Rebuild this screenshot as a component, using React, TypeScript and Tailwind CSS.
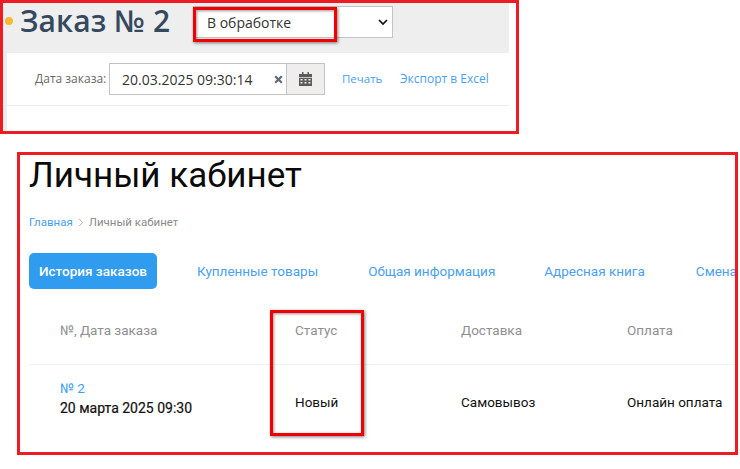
import React from "react";

function Chevron() {
  return (
    <svg width="10" height="7" viewBox="0 0 10 7" className="block">
      <path d="M1 1l4 4 4-4" fill="none" stroke="#111" strokeWidth="1.7" />
    </svg>
  );
}

function Calendar() {
  return (
    <svg width="13" height="14" viewBox="0 0 13 14" className="block" fill="#5f5a57">
      <path d="M3 0h1.5v2H3zM8.5 0H10v2H8.5z" />
      <path d="M0 2h13v3H0z" />
      <path d="M0 5.8h13V14H0zM1.5 7v1.5h2V7zm4 0v1.5h2V7zm4 0v1.5h2V7zm-8 3v1.5h2V10zm4 0v1.5h2V10zm4 0v1.5h2V10z" fillRule="evenodd" />
    </svg>
  );
}

function Clear() {
  return (
    <svg width="9" height="9" viewBox="0 0 9 9" className="block">
      <path d="M1.2 1.2l6.6 6.6M7.8 1.2L1.2 7.8" fill="none" stroke="#5f6b76" strokeWidth="2.2" />
    </svg>
  );
}

export default function App() {
  return (
    <div className="relative w-[740px] h-[469px] bg-white overflow-hidden font-['Roboto',sans-serif]">
      {/* Upper crop */}
      <section className="w-[519px] h-[134px] border-[3px] border-[#ed1c24] font-['Open_Sans',sans-serif]">
        <div className="flex h-full w-[506px] flex-col bg-[#eeeeee]">
          <header className="flex h-[50px] shrink-0 items-start">
            <span className="ml-[2px] mt-[14px] size-[8px] rounded-full bg-[#f9b934]" />
            <h1 className="ml-[7px] mt-[-3px] w-[152px] text-[30px] leading-[41px] font-semibold text-[#34495e] tracking-[0.1px] whitespace-nowrap">Заказ № 2</h1>
            <div className="ml-[21px] mt-[3px] flex h-[32px] w-[200px] items-center justify-between border border-[#c4c4c4] bg-white pl-[13px] pr-[4px] text-[14px] text-[#333]">
              <span>В обработке</span>
              <Chevron />
            </div>
          </header>
          <div className="ml-[4px] flex-1 bg-white">
            <div className="flex h-[53px] items-start border-b border-[#eeeeee] pl-[28px] pt-[10px]">
              <span className="mt-[8px] w-[71px] text-[12px] leading-[16px] text-[#666] whitespace-nowrap">Дата заказа:</span>
              <div className="ml-[3px] flex h-[32px] w-[178px] items-center justify-between border border-[#c4c4c4] pl-[12px] pr-[3px] text-[14px] text-[#333] whitespace-nowrap">
                <span>20.03.2025 09:30:14</span>
                <Clear />
              </div>
              <div className="flex h-[32px] w-[38px] items-center justify-center border border-l-0 border-[#c4c4c4] bg-[#eeeeee]">
                <Calendar />
              </div>
              <a className="ml-[17px] mt-[8px] w-[41px] text-[11.5px] leading-[16px] text-[#4a9ff0] whitespace-nowrap">Печать</a>
              <a className="ml-[17px] mt-[8px] text-[12px] leading-[16px] text-[#4a9ff0] whitespace-nowrap">Экспорт в Excel</a>
            </div>
          </div>
        </div>
      </section>

      {/* Lower crop */}
      <section className="ml-[17px] mt-[18px] h-[303px] w-[721px] overflow-hidden border-[3px] border-[#ed1c24] pl-[9px]">
        <h2 className="text-[35px] leading-[42px] text-[#0a0a0a] whitespace-nowrap">Личный кабинет</h2>
        <nav className="mt-[18px] flex items-center text-[11.5px] leading-[14px] whitespace-nowrap">
          <a className="text-[#4a9ff0]">Главная</a>
          <svg width="6" height="9" viewBox="0 0 6 9" className="mx-[5px] shrink-0">
            <path d="M1 .8l3.6 3.7L1 8.2" fill="none" stroke="#aaa" strokeWidth="0.9" />
          </svg>
          <span className="text-[#8a8a8a]">Личный кабинет</span>
        </nav>
        <div className="mt-[24px] flex items-center text-[13.5px] whitespace-nowrap">
          <button className="h-[36px] w-[128px] shrink-0 rounded-[5px] bg-[#2f9cf0] font-medium text-white">История заказов</button>
          <a className="ml-[40px] text-[#4a9ff0]">Купленные товары</a>
          <a className="ml-[50px] text-[#4a9ff0]">Общая информация</a>
          <a className="ml-[49px] text-[#4a9ff0]">Адресная книга</a>
          <a className="ml-[51px] text-[#4a9ff0]">Смена</a>
        </div>
        <div className="mt-[20px] border-b border-[#eef0f5] h-[56px] grid grid-cols-[235px_166px_166px_1fr] pl-[31px] pt-[11px] text-[13.5px] leading-[20px] text-[#8f8f8f] whitespace-nowrap">
          <span>№, Дата заказа</span>
          <span>Статус</span>
          <span>Доставка</span>
          <span>Оплата</span>
        </div>
        <div className="grid grid-cols-[235px_166px_166px_1fr] items-start pl-[31px] pt-[13px] text-[13.5px] leading-[20px] text-[#111] whitespace-nowrap">
          <div>
            <a className="block text-[#3d9df0]">№ 2</a>
            <span className="text-[14px] [-webkit-text-stroke:0.2px_#111]">20 марта 2025 09:30</span>
          </div>
          <span className="mt-[14px]">Новый</span>
          <span className="mt-[14px]">Самовывоз</span>
          <span className="mt-[14px]">Онлайн оплата</span>
        </div>
      </section>

      {/* Annotation frames */}
      <div className="absolute left-[193px] top-[7px] h-[35px] w-[144px] border-[3px] border-[#f00000] shadow-[1px_1px_3px_rgba(0,0,0,0.5),inset_1px_1px_3px_rgba(0,0,0,0.4)]" />
      <div className="absolute left-[270px] top-[310px] h-[126px] w-[94px] border-[3px] border-[#f00000] shadow-[1px_1px_3px_rgba(0,0,0,0.5),inset_1px_1px_3px_rgba(0,0,0,0.4)]" />
    </div>
  );
}
